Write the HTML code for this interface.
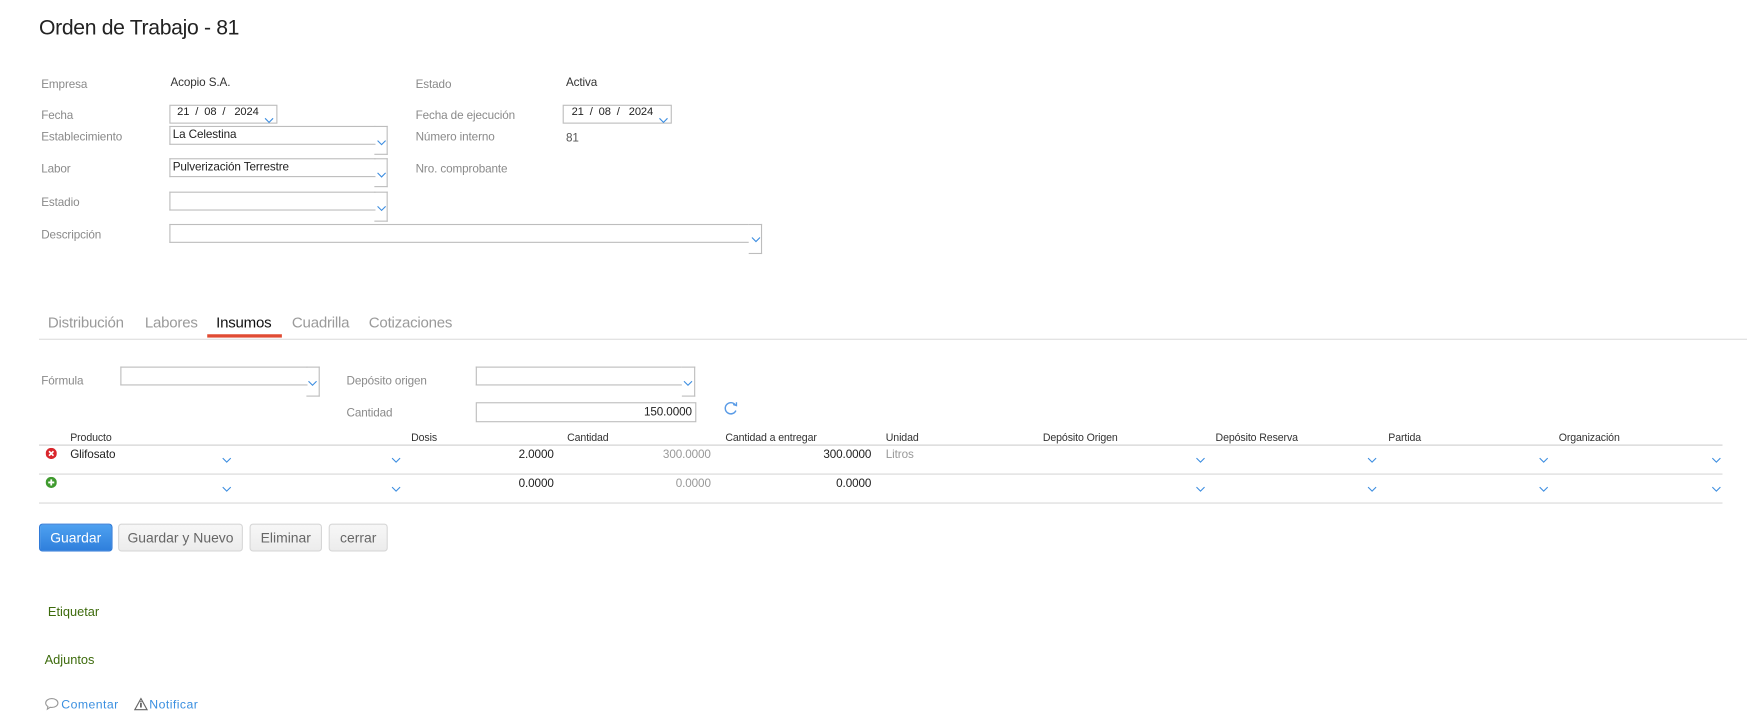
<!DOCTYPE html>
<html><head><meta charset="utf-8"><style>
html,body{margin:0;padding:0;background:#fff;overflow:hidden;width:1747px;height:728px}
#w{position:absolute;left:0;top:0;width:1568px;height:653px;transform:scale(1.11416);transform-origin:0 0;font-family:"Liberation Sans",sans-serif}
#w div,#w span{position:absolute;white-space:nowrap}
.l{font-size:10.5px;color:#8a8a8a;line-height:14px;letter-spacing:-0.1px}
.v{font-size:10.5px;color:#333;line-height:14px;letter-spacing:-0.1px}
.in{border:1px solid #bdbdbd;box-sizing:border-box;background:#fff}
.sa{border:1px solid #bdbdbd;border-right:none;box-sizing:border-box;height:17px}
.sb{border:1px solid #bdbdbd;border-left:none;box-sizing:border-box;width:12px}
.tab{font-size:13.5px;color:#9a9a9a;top:282px;line-height:16px;letter-spacing:-0.2px}
.h{font-size:9.5px;color:#333;top:388px;line-height:12px;letter-spacing:-0.1px}
.btn{font-size:12.5px;color:#666;top:470px;height:25px;line-height:25px;text-align:center;border:1px solid #d6d6d6;border-radius:3px;background:linear-gradient(#f7f7f7,#ececec);box-sizing:border-box}
.n{font-size:10.5px;line-height:14px;text-align:right;letter-spacing:-0.1px}
</style></head><body><div id="w">
<svg width="0" height="0" style="position:absolute"><defs><symbol id="c" viewBox="0 0 10 6"><path d="M1 1 L5 5 L9 1" fill="none" stroke="#3c8de0" stroke-width="1.1"/></symbol></defs></svg>

<div style="left:35px;top:14px;font-size:19px;color:#222;line-height:24px;letter-spacing:-0.3px">Orden de Trabajo - 81</div>

<div class="l" style="left:37px;top:69px">Empresa</div>
<div class="v" style="left:153px;top:67px">Acopio S.A.</div>
<div class="l" style="left:373px;top:69px">Estado</div>
<div class="v" style="left:508px;top:67px">Activa</div>

<div class="l" style="left:37px;top:97px">Fecha</div>
<div class="in" style="left:152px;top:94px;width:97px;height:17px"></div>
<div class="v" style="left:159px;top:94px;color:#222;font-size:10px">21 &nbsp;/ &nbsp;08 &nbsp;/ &nbsp; 2024</div>
<svg style="position:absolute;left:237px;top:105px" width="9" height="6"><use href="#c"/></svg>
<div class="l" style="left:373px;top:97px">Fecha de ejecución</div>
<div class="in" style="left:505px;top:94px;width:98px;height:17px"></div>
<div class="v" style="left:513px;top:94px;color:#222;font-size:10px">21 &nbsp;/ &nbsp;08 &nbsp;/ &nbsp; 2024</div>
<svg style="position:absolute;left:591px;top:105px" width="9" height="6"><use href="#c"/></svg>

<div class="l" style="left:37px;top:116px">Establecimiento</div>
<div class="sa" style="left:152px;top:113px;width:185px"></div><div class="sb" style="left:336px;top:113px;height:26px"></div>
<div class="v" style="left:155px;top:114px;color:#222">La Celestina</div>
<svg style="position:absolute;left:338px;top:125px" width="9" height="6"><use href="#c"/></svg>
<div class="l" style="left:373px;top:116px">Número interno</div>
<div class="v" style="left:508px;top:117px;color:#555">81</div>

<div class="l" style="left:37px;top:145px">Labor</div>
<div class="sa" style="left:152px;top:142px;width:185px"></div><div class="sb" style="left:336px;top:142px;height:26px"></div>
<div class="v" style="left:155px;top:143px;color:#222">Pulverización Terrestre</div>
<svg style="position:absolute;left:338px;top:154px" width="9" height="6"><use href="#c"/></svg>
<div class="l" style="left:373px;top:145px">Nro. comprobante</div>

<div class="l" style="left:37px;top:175px">Estadio</div>
<div class="sa" style="left:152px;top:172px;width:185px"></div><div class="sb" style="left:336px;top:172px;height:27px"></div>
<svg style="position:absolute;left:338px;top:184px" width="9" height="6"><use href="#c"/></svg>

<div class="l" style="left:37px;top:204px">Descripción</div>
<div class="sa" style="left:152px;top:201px;width:520px"></div><div class="sb" style="left:672px;top:201px;height:27px"></div>
<svg style="position:absolute;left:674px;top:212px" width="9" height="6"><use href="#c"/></svg>

<div class="tab" style="left:43px">Distribución</div>
<div class="tab" style="left:130px">Labores</div>
<div class="tab" style="left:194px;color:#111">Insumos</div>
<div class="tab" style="left:262px">Cuadrilla</div>
<div class="tab" style="left:331px">Cotizaciones</div>
<div style="left:186px;top:300px;width:67px;height:3px;background:#e04b33"></div>
<div style="left:35px;top:304px;width:1533px;height:1px;background:#ddd"></div>

<div class="l" style="left:37px;top:335px">Fórmula</div>
<div class="sa" style="left:108px;top:329px;width:168px"></div><div class="sb" style="left:275px;top:329px;height:27px"></div>
<svg style="position:absolute;left:276px;top:341px" width="9" height="6"><use href="#c"/></svg>
<div class="l" style="left:311px;top:335px">Depósito origen</div>
<div class="sa" style="left:427px;top:329px;width:185px"></div><div class="sb" style="left:612px;top:329px;height:27px"></div>
<svg style="position:absolute;left:613px;top:341px" width="9" height="6"><use href="#c"/></svg>
<div class="l" style="left:311px;top:364px">Cantidad</div>
<div class="in" style="left:427px;top:361px;width:198px;height:18px"></div>
<div class="n" style="left:427px;top:363px;width:194px;color:#222">150.0000</div>
<svg style="position:absolute;left:649px;top:360px" width="14" height="13" viewBox="0 0 14 13"><path d="M11 3.5 A5 5 0 1 0 11.5 8.5" fill="none" stroke="#5a9be6" stroke-width="1.3"/><path d="M9 3 L12 4 L12 1" fill="none" stroke="#5a9be6" stroke-width="1.2"/></svg>

<div class="h" style="left:63px">Producto</div>
<div class="h" style="left:369px">Dosis</div>
<div class="h" style="left:509px">Cantidad</div>
<div class="h" style="left:651px">Cantidad a entregar</div>
<div class="h" style="left:795px">Unidad</div>
<div class="h" style="left:936px">Depósito Origen</div>
<div class="h" style="left:1091px">Depósito Reserva</div>
<div class="h" style="left:1246px">Partida</div>
<div class="h" style="left:1399px">Organización</div>
<div style="left:35px;top:399px;width:1511px;height:1px;background:#cfcfcf"></div>
<div style="left:35px;top:425px;width:1511px;height:1px;background:#d8d8d8"></div>
<div style="left:35px;top:451px;width:1511px;height:1px;background:#d8d8d8"></div>

<svg style="position:absolute;left:41px;top:402px" width="10" height="10"><circle cx="5" cy="5" r="5" fill="#d9262c"/><path d="M3 3L7 7M7 3L3 7" stroke="#fff" stroke-width="1.5"/></svg>
<div class="v" style="left:63px;top:401px;color:#222">Glifosato</div>
<div class="n" style="left:397px;top:401px;width:100px;color:#222">2.0000</div>
<div class="n" style="left:538px;top:401px;width:100px;color:#999">300.0000</div>
<div class="n" style="left:682px;top:401px;width:100px;color:#222">300.0000</div>
<div class="v" style="left:795px;top:401px;color:#999">Litros</div>

<svg style="position:absolute;left:41px;top:428px" width="10" height="10"><circle cx="5" cy="5" r="5" fill="#3f9a2e"/><path d="M5 2.3V7.7M2.3 5H7.7" stroke="#fff" stroke-width="1.6"/></svg>
<div class="n" style="left:397px;top:427px;width:100px;color:#222">0.0000</div>
<div class="n" style="left:538px;top:427px;width:100px;color:#999">0.0000</div>
<div class="n" style="left:682px;top:427px;width:100px;color:#222">0.0000</div>

<svg style="position:absolute;left:199px;top:410px" width="9" height="6"><use href="#c"/></svg>
<svg style="position:absolute;left:351px;top:410px" width="9" height="6"><use href="#c"/></svg>
<svg style="position:absolute;left:1073px;top:410px" width="9" height="6"><use href="#c"/></svg>
<svg style="position:absolute;left:1227px;top:410px" width="9" height="6"><use href="#c"/></svg>
<svg style="position:absolute;left:1381px;top:410px" width="9" height="6"><use href="#c"/></svg>
<svg style="position:absolute;left:1536px;top:410px" width="9" height="6"><use href="#c"/></svg>
<svg style="position:absolute;left:199px;top:436px" width="9" height="6"><use href="#c"/></svg>
<svg style="position:absolute;left:351px;top:436px" width="9" height="6"><use href="#c"/></svg>
<svg style="position:absolute;left:1073px;top:436px" width="9" height="6"><use href="#c"/></svg>
<svg style="position:absolute;left:1227px;top:436px" width="9" height="6"><use href="#c"/></svg>
<svg style="position:absolute;left:1381px;top:436px" width="9" height="6"><use href="#c"/></svg>
<svg style="position:absolute;left:1536px;top:436px" width="9" height="6"><use href="#c"/></svg>

<div class="btn" style="left:35px;width:66px;color:#fff;border-color:#2f7ad8;background:linear-gradient(#4ea1f0,#2f7fdc)">Guardar</div>
<div class="btn" style="left:106px;width:112px">Guardar y Nuevo</div>
<div class="btn" style="left:224px;width:65px">Eliminar</div>
<div class="btn" style="left:295px;width:53px">cerrar</div>

<div style="left:43px;top:543px;font-size:11.5px;color:#3d6b0c;line-height:14px">Etiquetar</div>
<div style="left:40px;top:586px;font-size:11.5px;color:#3d6b0c;line-height:14px">Adjuntos</div>
<svg style="position:absolute;left:40px;top:626px" width="13" height="12" viewBox="0 0 13 12"><path d="M6.5 1C3.5 1 1 2.8 1 5c0 1.3.8 2.4 2 3.1L2.5 10.5 5 8.8c.5.1 1 .2 1.5.2 3 0 5.5-1.8 5.5-4S9.5 1 6.5 1z" fill="none" stroke="#999" stroke-width="1"/></svg>
<div style="left:55px;top:626px;font-size:11px;color:#3a8fe0;line-height:14px;letter-spacing:0.4px">Comentar</div>
<svg style="position:absolute;left:120px;top:626px" width="13" height="12" viewBox="0 0 13 12"><path d="M6.5 1L12 11H1z" fill="none" stroke="#666" stroke-width="1"/><path d="M6.5 5V9" stroke="#333" stroke-width="1.2"/><circle cx="6.5" cy="3.9" r=".6" fill="#333"/></svg>
<div style="left:134px;top:626px;font-size:11px;color:#3a8fe0;line-height:14px;letter-spacing:0.4px">Notificar</div>
</div></body></html>
